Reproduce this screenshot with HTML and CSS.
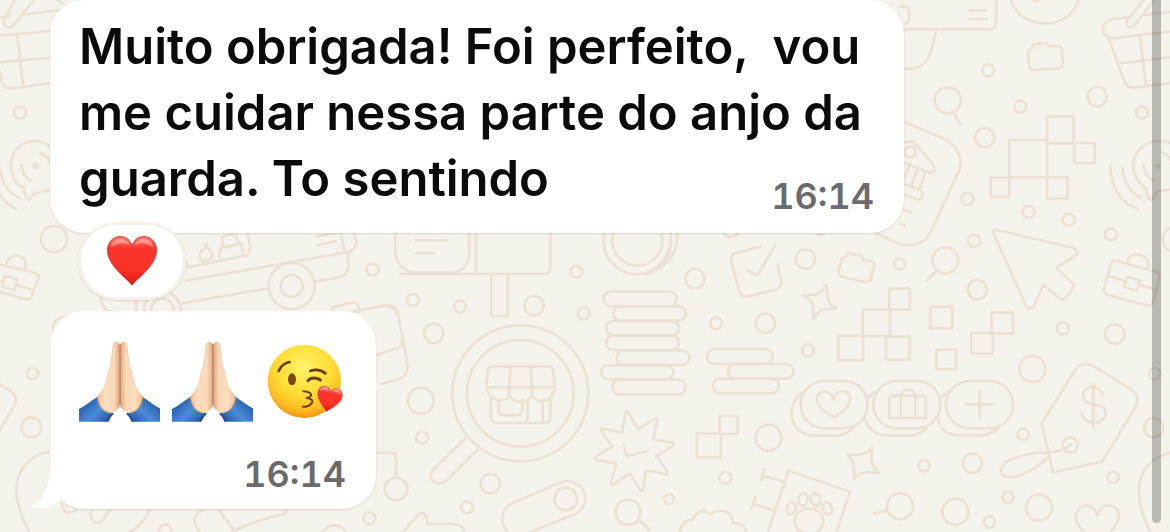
FILE: index.html
```
<!DOCTYPE html>
<html lang="pt-BR">
<head>
    <meta charset="UTF-8">
    <meta name="viewport" content="width=device-width, initial-scale=1">
    <title>Conversa</title>
    <link rel="stylesheet" href="styles.css">
</head>
<body>
    <!-- shared drawings -->
    <svg class="defs" aria-hidden="true">
        <defs>
            <linearGradient id="red" x1="0" y1="0" x2="0" y2="1">
                <stop offset="0" stop-color="#ff7a6e"/>
                <stop offset=".25" stop-color="#f8352c"/>
                <stop offset=".7" stop-color="#fb3226"/>
                <stop offset="1" stop-color="#d01710"/>
            </linearGradient>
            <linearGradient id="skin" x1="0" x2="1">
                <stop offset="0" stop-color="#e9b68e"/>
                <stop offset=".35" stop-color="#fbdfc0"/>
                <stop offset=".75" stop-color="#f8d7b6"/>
                <stop offset="1" stop-color="#dba07a"/>
            </linearGradient>
            <linearGradient id="sleeve" gradientUnits="userSpaceOnUse" x1="20" y1="185" x2="88" y2="252">
                <stop offset="0" stop-color="#2a5fae"/>
                <stop offset=".45" stop-color="#4a8cd8"/>
                <stop offset=".78" stop-color="#2f67b6"/>
                <stop offset="1" stop-color="#16295f"/>
            </linearGradient>
            <radialGradient id="face" cx=".5" cy=".32" r=".68">
                <stop offset="0" stop-color="#fff36b"/>
                <stop offset=".55" stop-color="#ffdc33"/>
                <stop offset=".85" stop-color="#fdb921"/>
                <stop offset="1" stop-color="#ef9413"/>
            </radialGradient>
            <symbol id="heart" viewBox="0 0 150 150">
                <path d="M75 148C68 134 1 90 1 43C1 17 20 1 40 1C57 1 70 12 75 30C80 12 93 1 110 1C130 1 149 17 149 43C149 90 82 134 75 148Z" fill="url(#red)" stroke="#c9231d" stroke-width="2"/>
                <path d="M12 34C14 18 26 8 41 8C54 8 63 16 67 27C50 19 28 20 12 34ZM83 27C87 16 96 8 109 8C124 8 136 18 138 34C122 20 100 19 83 27Z" fill="#fff" opacity=".35"/>
            </symbol>
            <symbol id="pray" viewBox="0 0 243 243">
                <g id="hand">
                    <path d="M123 12C117 0 103 1 102 12C98 38 98 62 92 80C86 94 84 112 80 128C74 146 65 157 53 168L54 194C64 212 82 219 96 216C110 209 121 204 124 190Z" fill="url(#skin)" stroke="#dca57e" stroke-width="1"/>
                    <path d="M0 204C20 194 38 178 55 168C56 192 70 213 92 217L102 215L104 219L96 228L88 242H0Z" fill="url(#sleeve)"/>
                    <path d="M55 169C57 192 72 213 94 216" fill="none" stroke="#d88b4e" stroke-width="3"/>
                </g>
                <use href="#hand" transform="translate(246 0) scale(-1 1)"/>
                <path d="M123 10C124 70 123 130 123 190" fill="none" stroke="#b9754f" stroke-width="3"/>
            </symbol>
            <symbol id="kiss" viewBox="0 0 243 243">
                <circle cx="118" cy="121" r="110" fill="url(#face)"/>
                <g fill="none" stroke="#6b3b08" stroke-width="8" stroke-linecap="round" stroke-linejoin="round">
                    <path d="M41 90C48 74 60 66 74 63"/>
                    <path d="M136 90C150 85 168 87 181 97"/>
                    <path d="M129 119C138 108 157 110 166 117" stroke-width="9"/>
                    <path d="M115 151C130 151 143 159 137 165C134 169 125 171 125 171C140 172 146 180 139 188C134 194 123 198 114 197" stroke-width="6"/>
                </g>
                <ellipse cx="81" cy="115" rx="12" ry="18" fill="#7b480b"/>
                <use href="#heart" x="154" y="138" width="76" height="76" transform="rotate(12 192 176)"/>
            </symbol>
        </defs>
    </svg>

    <main class="chat">
        <!-- wallpaper doodles -->
        <svg class="wallpaper" viewBox="0 0 3510 1596" preserveAspectRatio="xMinYMin slice" aria-hidden="true">
            <!-- top left -->
            <g>
                <path d="M50 -10L12 60C8 76 24 88 38 78L110 -10M0 52L30 48M65 45L180 30M165 -5L200 20M0 107L160 92M0 187L160 172M52 108L70 262M-5 200L4 240C8 262 20 267 40 265L160 248"/>
                <circle cx="60" cy="338" r="18"/>
                <path d="M150 440C100 405 40 430 33 490C30 530 50 555 70 562C75 580 78 598 86 600C95 596 98 583 106 580C125 578 140 572 152 568"/>
                <path d="M64 493C66 518 77 532 92 541M120 458C134 463 145 475 150 490M0 505C5 550 28 580 60 595M-8 570C8 600 25 617 48 627"/>
                <circle class="dot" cx="107" cy="499" r="10"/>
                <circle cx="162" cy="717" r="39"/>
                <path d="M-10 792L15 797L104 818C114 821 118 826 115 838L95 888C92 898 86 900 76 897L-10 874M18 797C22 762 62 755 76 785V810M-10 840L8 846M50 855L98 869M14 828L52 837L44 870L7 861Z"/>
            </g>
            <!-- truck and left edge -->
            <g transform="translate(60 660)">
                <path d="M470 110C490 110 505 130 500 143L680 106C690 102 692 95 690 80L680 20M498 182L975 98M485 250L745 205M885 184L955 172C975 168 984 158 984 140L985 98M960 30L975 98C1000 95 1010 80 1008 60C1004 40 990 20 975 10M890 50L948 38M893 75L948 64M555 73V85C535 95 532 122 552 123C585 120 582 95 562 85V73ZM598 112L602 85L664 70L670 103M610 80L605 55C605 48 640 38 648 45L656 70"/>
                <circle cx="815" cy="198" r="69"/>
                <circle cx="815" cy="198" r="33"/>
                <circle cx="427" cy="270" r="55"/>
                <circle cx="427" cy="270" r="34"/>
                <path d="M242 225C245 255 255 275 275 275M348 240V275"/>
                <circle cx="1058" cy="149" r="18"/>
                <path d="M935 275L938 262L995 248C1010 246 1018 256 1016 275M1000 275L1090 257C1110 255 1125 265 1130 280M98 330C98 300 120 285 150 290"/>
                <circle cx="38" cy="461" r="17"/>
                <circle cx="34" cy="622" r="30"/>
                <path d="M-62 492L-30 512C-10 525 -8 540 -18 560L-65 638M95 695C30 700 -18 755 -10 825C-5 870 10 900 30 940M320 940C355 925 380 900 393 860M125 850C125 880 160 885 168 868M215 870C200 900 235 925 252 895C262 875 265 875 275 868"/>
                <circle cx="436" cy="932" r="18"/>
                <path d="M550 870C520 880 520 905 530 922L545 942M595 868L650 942M625 942C680 910 740 895 798 880V868M1060 410L1080 402M1060 698H1080"/>
                <circle cx="943" cy="955" r="39"/>
                <circle cx="1048" cy="895" r="18"/>
            </g>
            <!-- board, magnifier, stack of coins -->
            <g transform="translate(1140 660)">
                <path d="M46 30V90C46 130 70 158 110 158H210C250 158 268 130 268 90V30M288 30V160M60 162H490Q511 162 511 140V30M107 61H202M107 100H163M334 165V288H383V165"/>
                <circle cx="772" cy="62" r="101"/>
                <circle cx="772" cy="62" r="75"/>
                <path d="M870 30C882 90 850 135 800 162M890 30C900 95 860 145 800 162"/>
                <circle cx="589" cy="155" r="18"/>
                <circle cx="99" cy="240" r="18"/>
                <circle cx="240" cy="260" r="18"/>
                <circle cx="462" cy="257" r="29"/>
                <circle cx="611" cy="280" r="18"/>
                <circle cx="161" cy="340" r="29"/>
                <circle cx="122" cy="542" r="39"/>
                <circle cx="126" cy="653" r="18"/>
                <circle cx="48" cy="807" r="34"/>
                <circle cx="331" cy="791" r="29"/>
                <circle cx="261" cy="862" r="18"/>
                <circle cx="867" cy="837" r="15"/>
                <path d="M0 260C30 250 48 260 54 282L82 430C86 460 70 475 50 480L0 492M0 400L45 387C65 382 70 370 66 350M0 698H30Q48 698 48 716V772"/>
                <circle cx="421" cy="520" r="204"/>
                <circle cx="421" cy="520" r="160"/>
                <path d="M258 653L158 750C140 775 170 805 198 783L295 686"/>
                <path d="M340 439H505Q518 439 520 452L524 500C522 555 465 550 455 528C440 550 400 550 388 528C370 550 322 545 319 495L324 452Q326 439 340 439M391 440L387 528M452 440L457 528M320 502H523M332 535V590Q334 609 352 609H492Q511 609 511 590V535M356 540V570Q358 586 372 586H410Q427 586 427 568V542M443 540V607M488 540V607"/>
                <rect x="671" y="215" width="219" height="44" rx="22"/>
                <rect x="700" y="259" width="218" height="43" rx="22"/>
                <rect x="678" y="303" width="219" height="43" rx="22"/>
                <rect x="678" y="347" width="219" height="43" rx="22"/>
                <rect x="710" y="391" width="219" height="44" rx="22"/>
                <rect x="663" y="436" width="218" height="42" rx="22"/>
                <rect x="697" y="479" width="220" height="44" rx="22"/>
                <path d="M745 578L776 628L823 597Q834 592 831 605L820 658L875 667Q888 671 876 679L829 708L862 755Q864 766 853 762L798 750L791 805Q786 818 779 807L750 760L703 791Q690 798 693 785L709 731L650 720Q638 715 650 708L697 680L664 634Q660 623 673 627L727 638L735 582Q738 571 745 578ZM731 673L740 708L804 693"/>
                <path d="M445 938L585 883C645 850 610 770 545 786L400 848C355 870 360 915 388 940"/>
                <circle cx="557" cy="837" r="34"/>
                <circle cx="744" cy="877" r="38"/>
                <path d="M779 902L808 928M65 940L112 888C122 874 145 880 142 912H220C245 912 252 925 255 940M903 940C900 910 920 900 937 900C945 880 960 875 975 870"/>
            </g>
            <!-- check box, squares, badges -->
            <g transform="translate(2040 660)">
                <path d="M242 80L168 99Q150 104 153 122L178 214Q184 234 202 229L288 208Q307 201 304 184L293 134M203 151L232 167L286 74"/>
                <circle cx="153" cy="23" r="28"/>
                <circle cx="423" cy="24" r="20"/>
                <circle cx="45" cy="176" r="29"/>
                <circle cx="376" cy="117" r="29"/>
                <circle cx="658" cy="132" r="17"/>
                <circle cx="108" cy="310" r="18"/>
                <circle cx="256" cy="310" r="29"/>
                <circle cx="384" cy="391" r="18"/>
                <path d="M485 120Q488 111 500 108L503 98L545 108L548 119L575 124Q585 128 583 138L572 178Q568 189 555 186L488 171Q474 167 476 153Z"/>
                <circle cx="796" cy="121" r="39"/>
                <path d="M768 153L741 182M440 194C440 240 445 252 470 265C425 265 418 270 401 297C402 250 395 240 369 225C410 228 425 220 440 194Z"/>
                <path d="M628 206H690V269H628ZM548 269H630V349H548ZM475 347H549V421H475ZM618 350H689V419H618ZM751 260H817V325H751ZM769 389H828V447H769Z"/>
                <rect x="81" y="387" width="197" height="45" rx="22"/>
                <rect x="144" y="432" width="197" height="44" rx="22"/>
                <rect x="99" y="476" width="198" height="44" rx="22"/>
                <path d="M119 588H173V642H119ZM51 641H123V712H51Z"/>
                <circle cx="265" cy="653" r="39"/>
                <circle cx="136" cy="773" r="18"/>
                <circle cx="732" cy="737" r="17"/>
                <circle cx="660" cy="859" r="39"/>
                <rect x="362" y="483" width="201" height="142" rx="71"/>
                <rect x="580" y="483" width="201" height="142" rx="71"/>
                <path d="M370 515C310 560 330 647 405 647H470Q495 645 518 626M563 535L584 514M556 598C566 630 595 647 625 647H690Q715 645 738 626"/>
                <path d="M463 592C440 580 412 560 411 538C410 512 450 502 460 538C470 502 512 510 510 538C508 560 485 580 463 592Z"/>
                <path d="M640 527H725Q737 527 737 538V594H628V538Q628 527 640 527M662 592V530C664 503 705 503 706 530V592"/>
                <path d="M576 683C570 725 578 745 597 759C555 754 540 755 522 776C525 735 520 720 501 703C535 708 560 705 576 683ZM621 871L582 880"/>
                <path d="M262 940L326 752L510 815L468 940M247 766L310 785M254 745L243 781M220 852L280 871M226 832L214 868M0 935C5 905 25 898 38 899C48 870 80 870 93 883C120 860 160 875 158 910C185 908 198 920 200 940"/>
                <ellipse cx="387" cy="903" rx="43" ry="38"/>
                <ellipse cx="334" cy="865" rx="13" ry="19" transform="rotate(20 334 865)"/>
                <ellipse cx="369" cy="839" rx="14" ry="19" transform="rotate(10 369 839)"/>
                <ellipse cx="407" cy="839" rx="14" ry="19" transform="rotate(-10 407 839)"/>
                <ellipse cx="442" cy="865" rx="14" ry="19" transform="rotate(-25 442 865)"/>
            </g>
            <!-- top right -->
            <g transform="translate(2700 0)">
                <path d="M0 88H265Q289 88 289 65V-5M0 20H15Q28 22 28 35V55Q26 70 12 72M208 31H260M208 57H260M109 92L95 145C85 190 55 212 10 205M330 -10C350 90 510 105 540 -10"/>
                <circle class="dot" cx="410" cy="-6" r="14"/>
                <circle cx="265" cy="211" r="18"/>
                <circle cx="143" cy="301" r="39"/>
                <path d="M161 338L181 373"/>
                <path d="M397 142Q398 131 408 131L440 130L447 139L475 138Q486 140 486 152L488 190Q488 203 474 205L405 210Q390 211 388 198L384 162Q384 150 397 142Z"/>
                <circle cx="361" cy="320" r="18"/>
                <circle cx="591" cy="290" r="29"/>
                <circle cx="254" cy="413" r="29"/>
                <circle cx="726" cy="338" r="18"/>
                <circle cx="203" cy="597" r="18"/>
                <circle cx="386" cy="636" r="18"/>
                <circle cx="506" cy="659" r="18"/>
                <circle cx="222" cy="723" r="18"/>
                <circle cx="633" cy="703" r="18"/>
                <circle cx="826" cy="717" r="38"/>
                <path d="M441 349H521V430H441ZM328 420H441V532H328ZM523 429H584V489H523ZM272 533H328V590H272ZM441 532H503V595H441Z"/>
                <path d="M0 360L135 418C175 440 188 475 178 510L95 690C75 735 30 745 -10 728L-110 682M0 428L40 424L100 495C108 510 100 523 85 517L0 483M12 552L60 570C75 580 65 605 50 598L0 578M30 492L12 535M55 502L36 553M77 515L60 562M0 625L32 637M0 670L14 677"/>
                <circle cx="31" cy="456" r="16"/>
                <path d="M740 -10L682 60C675 78 690 88 702 78L770 -10M682 52L640 57C600 63 600 110 635 115L810 95M730 45L810 36M627 117L672 240Q680 264 702 263L810 249M720 108L738 255M657 190L810 172"/>
                <path d="M810 428C750 410 700 445 700 498C700 530 720 555 738 565C743 590 745 600 753 599C763 596 766 580 775 573C790 573 805 570 815 565M730 493C732 518 745 532 759 541M787 458C800 463 812 475 815 490M667 502C670 550 695 580 722 593M631 496C632 560 660 610 714 627"/>
                <circle class="dot" cx="774" cy="499" r="8"/>
            </g>
            <!-- bottom right -->
            <g transform="translate(2700 786)">
                <path d="M285 -97L522 -42Q540 -30 525 -18L468 18L520 65Q525 70 520 78L497 107Q488 117 477 108L430 68L402 132Q390 148 378 132L280 -87Q279 -96 285 -97Z"/>
                <path d="M641 -5L770 29Q781 33 779 44L760 120Q755 134 742 131L622 98Q609 92 612 80L632 8Q635 -5 645 -3M683 -3C690 -35 745 -25 744 5V20M627 43L673 56M718 68L765 82M681 45L720 55L711 86L673 76Z"/>
                <path d="M275 152H339V215H275ZM214 213H278V275H214Z"/>
                <circle cx="232" cy="83" r="29"/>
                <circle cx="489" cy="199" r="18"/>
                <circle cx="644" cy="216" r="29"/>
                <circle cx="397" cy="321" r="39"/>
                <circle cx="764" cy="335" r="17"/>
                <circle cx="761" cy="497" r="29"/>
                <circle cx="370" cy="517" r="17"/>
                <circle cx="217" cy="604" r="29"/>
                <circle cx="639" cy="646" r="17"/>
                <circle cx="324" cy="706" r="17"/>
                <circle cx="417" cy="737" r="39"/>
                <circle cx="166" cy="749" r="39"/>
                <circle cx="268" cy="780" r="17"/>
                <rect x="138" y="357" width="201" height="142" rx="71"/>
                <path d="M239 386V468M197 427H281M114 470C118 500 145 520 175 520H240Q270 519 294 500M122 409L148 388"/>
                <path d="M425 484L525 325C540 302 565 303 585 315L690 380C715 397 717 415 705 438L607 599L459 631ZM445 572C380 570 290 595 304 632C325 670 410 620 445 585M445 572C475 570 495 562 514 547"/>
                <circle cx="511" cy="549" r="23"/>
                <path d="M610 402C600 366 548 366 549 403C552 440 618 415 618 453C615 492 552 493 544 452M580 364V497M592 760C580 715 525 725 528 770C535 800 560 815 575 825M592 760C605 715 660 725 656 765C652 795 625 815 610 825M810 572C745 590 700 640 722 730C728 760 740 790 755 815"/>
            </g>
        </svg>

        <section class="messages">
            <article class="bubble bubble-text">
                <span class="text">Muito obrigada! Foi perfeito,  vou me cuidar nessa parte do anjo da guarda. To sentindo</span>
                <time class="time" datetime="16:14">16:14</time>
            </article>
            <button class="reaction" aria-label="Reação: coração">
                <svg class="reaction-heart"><use href="#heart"/></svg>
            </button>
            <article class="bubble bubble-emoji">
                <div class="emojis">
                    <svg class="emoji" role="img" aria-label="Mãos postas"><use href="#pray"/></svg>
                    <svg class="emoji" role="img" aria-label="Mãos postas"><use href="#pray"/></svg>
                    <svg class="emoji" role="img" aria-label="Mandando beijo"><use href="#kiss"/></svg>
                </div>
                <time class="time" datetime="16:14">16:14</time>
                <svg class="tail" viewBox="0 0 40 50" aria-hidden="true">
                    <path d="M20 0C20 26 17 36 1 49C14 50 24 47 31 41L40 20V0Z"/>
                </svg>
            </article>
        </section>
        <div class="scrollbar"></div>
    </main>
</body>
</html>
```
FILE: styles.css
```
* {
    box-sizing: border-box;
}
body {
    margin: 0;
    background-color: #f5f2eb;
    font-family: Inter, "Liberation Sans", sans-serif;
}
.defs {
    position: absolute;
    width: 0;
    height: 0;
}

.chat {
    position: relative;
    display: grid;
    align-content: start;
    min-height: 100vh;
    overflow: hidden;
}
.wallpaper {
    position: absolute;
    width: 100%;
    height: 100%;
    fill: none;
    stroke: #eae0d4;
    stroke-width: 8;
    stroke-linecap: round;
    stroke-linejoin: round;
}
.wallpaper .dot {
    fill: #eae0d4;
    stroke: none;
}
.messages {
    position: relative;
    display: flex;
    flex-direction: column;
    align-items: flex-start;
    padding: 0 50px 20px;
}

.bubble {
    position: relative;
    background-color: #fff;
    border-radius: 34px;
    box-shadow: 0 1px 2px rgba(80, 60, 30, 0.15);
}
.bubble-text {
    width: 80%;
    max-width: 854px;
    padding: 14px 30px 21px 29px;
    font-size: 49px;
    font-weight: 600;
    line-height: 66px;
}
.text {
    color: #0b0b0b;
    white-space: pre-wrap;
}
.time {
    color: #6b6b6b;
    font-size: 36px;
    font-weight: 600;
    font-variant-numeric: tabular-nums;
    line-height: 32px;
}
.bubble-text .time {
    float: right;
    margin-top: 34px;
}

.reaction {
    position: relative;
    display: flex;
    align-items: center;
    justify-content: center;
    width: 108px;
    height: 78px;
    margin: -11px 0 11px 28px;
    padding: 0;
    background-color: #fff;
    border: 3px solid #f5f1ea;
    border-radius: 39px;
    box-shadow: 0 1px 2px rgba(80, 60, 30, 0.15);
}
.reaction-heart {
    width: 50px;
    height: 50px;
}

.bubble-emoji {
    display: flex;
    flex-direction: column;
    gap: 36px;
    padding: 30px 30px 19px 29px;
}
.emojis {
    display: flex;
    gap: 12px;
}
.emoji {
    width: 81px;
    height: 81px;
}
.bubble-emoji .time {
    align-self: flex-end;
}
.tail {
    position: absolute;
    left: -20px;
    bottom: 0;
    width: 40px;
    height: 50px;
    fill: #fff;
}

.scrollbar {
    position: absolute;
    top: 0;
    right: 9px;
    bottom: 9px;
    width: 9px;
    background-color: rgba(0, 0, 0, 0.24);
    border-radius: 0 0 5px 5px;
}
```
